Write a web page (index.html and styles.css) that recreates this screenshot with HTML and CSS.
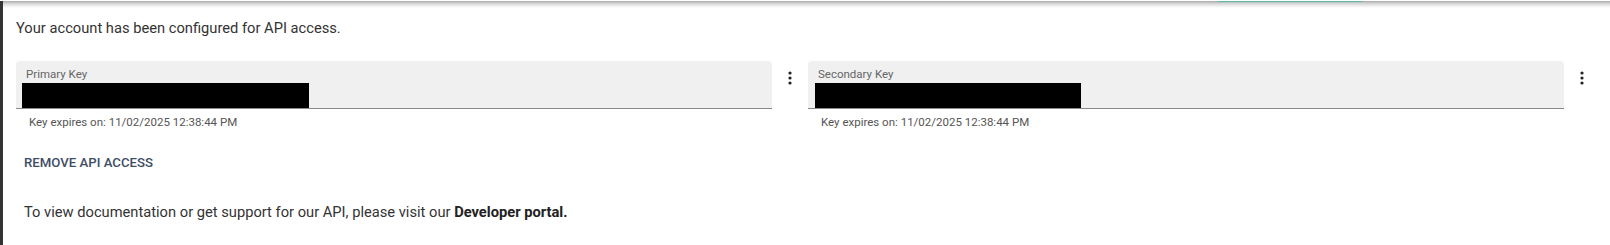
FILE: index.html
```html
<!DOCTYPE html>
<html lang="en">
<head>
<meta charset="utf-8">
<title>API access</title>
<link rel="stylesheet" href="styles.css">
</head>
<body>
<div class="frame">
  <div class="topbar"><div class="tab-indicator"></div></div>
  <div class="content">
    <p class="intro">Your account has been configured for API access.</p>
    <div class="keys">
      <div class="key-col">
        <div class="key-row">
          <div class="field">
            <div class="field-label">Primary Key</div>
            <div class="redacted redacted-primary"></div>
          </div>
          <button class="kebab" aria-label="More options">
            <svg width="4" height="14" viewBox="0 0 4 14"><circle cx="2" cy="2" r="1.6"/><circle cx="2" cy="7" r="1.6"/><circle cx="2" cy="12" r="1.6"/></svg>
          </button>
        </div>
        <div class="expiry">Key expires on: 11/02/2025 12:38:44 PM</div>
      </div>
      <div class="key-col">
        <div class="key-row">
          <div class="field">
            <div class="field-label">Secondary Key</div>
            <div class="redacted redacted-secondary"></div>
          </div>
          <button class="kebab" aria-label="More options">
            <svg width="4" height="14" viewBox="0 0 4 14"><circle cx="2" cy="2" r="1.6"/><circle cx="2" cy="7" r="1.6"/><circle cx="2" cy="12" r="1.6"/></svg>
          </button>
        </div>
        <div class="expiry">Key expires on: 11/02/2025 12:38:44 PM</div>
      </div>
    </div>
    <button class="remove-btn">REMOVE API ACCESS</button>
    <p class="portal">To view documentation or get support for our API, please visit our <strong>Developer portal.</strong></p>
  </div>
</div>
</body>
</html>
```

FILE: styles.css
```css
html, body {
  margin: 0;
  padding: 0;
  background: #ffffff;
}

body {
  font-family: Roboto, "Liberation Sans", Arial, sans-serif;
  color: #333333;
}

.frame {
  border-left: 3px solid #333333;
  min-height: 245px;
  box-sizing: border-box;
}

.topbar {
  height: 7px;
  background: linear-gradient(to bottom, #a9a9a9 0%, #d4d4d4 35%, #f2f2f2 75%, #ffffff 100%);
  padding-left: 1215px;
  box-sizing: border-box;
}

.tab-indicator {
  width: 144px;
  height: 1px;
  margin-top: 1px;
  background: #5cb8a7;
}

.content {
  padding: 0 10px 0 13px;
}

.intro {
  margin: 10px 0 0;
  font-size: 14.7px;
  line-height: 20px;
}

.keys {
  display: grid;
  grid-template-columns: 1fr 1fr;
  margin-top: 23px;
}

.key-row {
  display: grid;
  grid-template-columns: 1fr 36px;
}

.field {
  background: #f0f0f0;
  border-radius: 4px 4px 0 0;
  border-bottom: 1px solid #8a8a8a;
  padding: 7px 6px 1px;
  height: 48px;
  box-sizing: border-box;
}

.field-label {
  font-size: 11.5px;
  line-height: 13px;
  color: #666666;
  padding-left: 4px;
}

.redacted {
  background: #000000;
  height: 25px;
  margin-top: 2px;
}

.redacted-primary {
  width: 287px;
}

.redacted-secondary {
  width: 266px;
  margin-left: 1px;
}

.kebab {
  border: 0;
  background: none;
  padding: 10px 0 0;
  margin: 0;
  display: flex;
  justify-content: center;
  align-items: flex-start;
}

.kebab svg {
  fill: #222222;
  display: block;
}

.expiry {
  font-size: 11.5px;
  line-height: 13px;
  color: #555555;
  margin-top: 7px;
  padding-left: 13px;
}

.remove-btn {
  display: block;
  border: 0;
  background: none;
  margin: 26px 0 0;
  padding: 0 8px;
  font-family: Roboto, "Liberation Sans", Arial, sans-serif;
  font-size: 13.2px;
  font-weight: 500;
  line-height: 16px;
  color: #3e4d66;
  cursor: pointer;
}

.portal {
  margin: 31px 0 0;
  padding-left: 8px;
  font-size: 14.7px;
  line-height: 20px;
}

.portal strong {
  font-weight: 700;
  color: #222222;
}
```
